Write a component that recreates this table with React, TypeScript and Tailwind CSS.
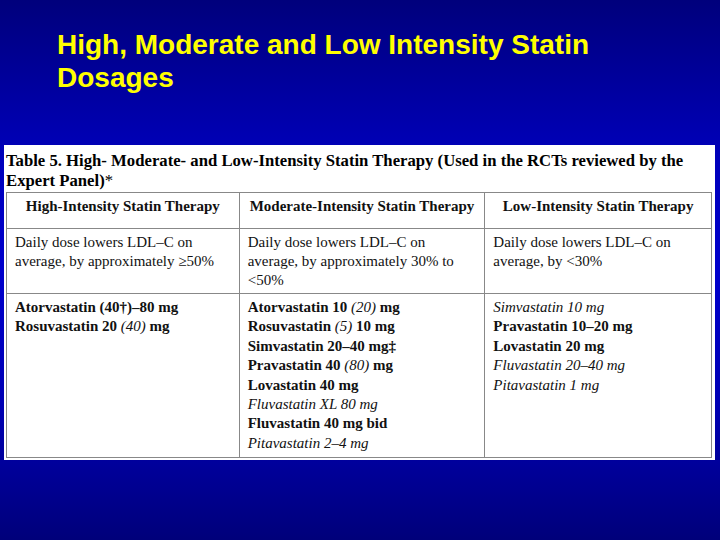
import React from "react";

const serif = { fontFamily: '"Liberation Serif", "Times New Roman", serif' };

const B = ({ children }: { children: React.ReactNode }) => (
  <span className="font-bold">{children}</span>
);
const I = ({ children }: { children: React.ReactNode }) => (
  <span className="italic font-normal">{children}</span>
);

export default function App() {
  return (
    <div className="w-[720px] h-[540px] overflow-hidden bg-[linear-gradient(to_bottom,#00007c_0%,#0000bc_30%,#0000cc_50%,#0000b4_75%,#00007a_100%)]">
      <h1
        className="pl-[57px] pt-[28px] h-[145px] text-[28px] leading-[33px] font-bold text-[#ffff00]"
        style={{ fontFamily: '"Liberation Sans", Arial, sans-serif' }}
      >
        High, Moderate and Low Intensity Statin
        <br />
        Dosages
      </h1>

      <div className="ml-[4px] w-[711px] h-[315px] bg-white pl-[2px] pt-[6px]" style={serif}>
        <p className="text-[16.7px] leading-[20px] font-bold text-black">
          Table 5. High- Moderate- and Low-Intensity Statin Therapy (Used in the RCTs reviewed by the
          <br />
          Expert Panel)<span className="font-normal">*</span>
        </p>
        <table className="mt-[1px] w-[706px] border-collapse text-[15px] text-[#111]">
          <colgroup>
            <col className="w-[233px]" />
            <col className="w-[246px]" />
            <col className="w-[227px]" />
          </colgroup>
          <thead>
            <tr className="h-[36px] leading-[19px]">
              <th className="border border-[#888] font-bold text-center align-top pt-[4px]">
                High-Intensity Statin Therapy
              </th>
              <th className="border border-[#888] font-bold text-center align-top pt-[4px]">
                Moderate-Intensity Statin Therapy
              </th>
              <th className="border border-[#888] font-bold text-center align-top pt-[4px]">
                Low-Intensity Statin Therapy
              </th>
            </tr>
          </thead>
          <tbody className="leading-[19px]">
            <tr className="h-[65px]">
              <td className="border border-[#888] align-top px-[8px] pt-[4px]">
                Daily dose lowers LDL–C on
                <br />
                average, by approximately ≥50%
              </td>
              <td className="border border-[#888] align-top px-[8px] pt-[4px]">
                Daily dose lowers LDL–C on
                <br />
                average, by approximately 30% to
                <br />
                &lt;50%
              </td>
              <td className="border border-[#888] align-top px-[8px] pt-[4px]">
                Daily dose lowers LDL–C on
                <br />
                average, by &lt;30%
              </td>
            </tr>
            <tr className="h-[164px] leading-[19.4px]">
              <td className="border border-[#888] align-top px-[8px] pt-[4px]">
                <div><B>Atorvastatin (40†)–80 mg</B></div>
                <div>
                  <B>Rosuvastatin 20</B> <I>(40)</I> <B>mg</B>
                </div>
              </td>
              <td className="border border-[#888] align-top px-[8px] pt-[4px]">
                <div>
                  <B>Atorvastatin 10</B> <I>(20)</I> <B>mg</B>
                </div>
                <div>
                  <B>Rosuvastatin</B> <I>(5)</I> <B>10 mg</B>
                </div>
                <div><B>Simvastatin 20–40 mg‡</B></div>
                <div>
                  <B>Pravastatin 40</B> <I>(80)</I> <B>mg</B>
                </div>
                <div><B>Lovastatin 40 mg</B></div>
                <div><I>Fluvastatin XL 80 mg</I></div>
                <div><B>Fluvastatin 40 mg bid</B></div>
                <div><I>Pitavastatin 2–4 mg</I></div>
              </td>
              <td className="border border-[#888] align-top px-[8px] pt-[4px]">
                <div><I>Simvastatin 10 mg</I></div>
                <div><B>Pravastatin 10–20 mg</B></div>
                <div><B>Lovastatin 20 mg</B></div>
                <div><I>Fluvastatin 20–40 mg</I></div>
                <div><I>Pitavastatin 1 mg</I></div>
              </td>
            </tr>
          </tbody>
        </table>
      </div>
    </div>
  );
}
